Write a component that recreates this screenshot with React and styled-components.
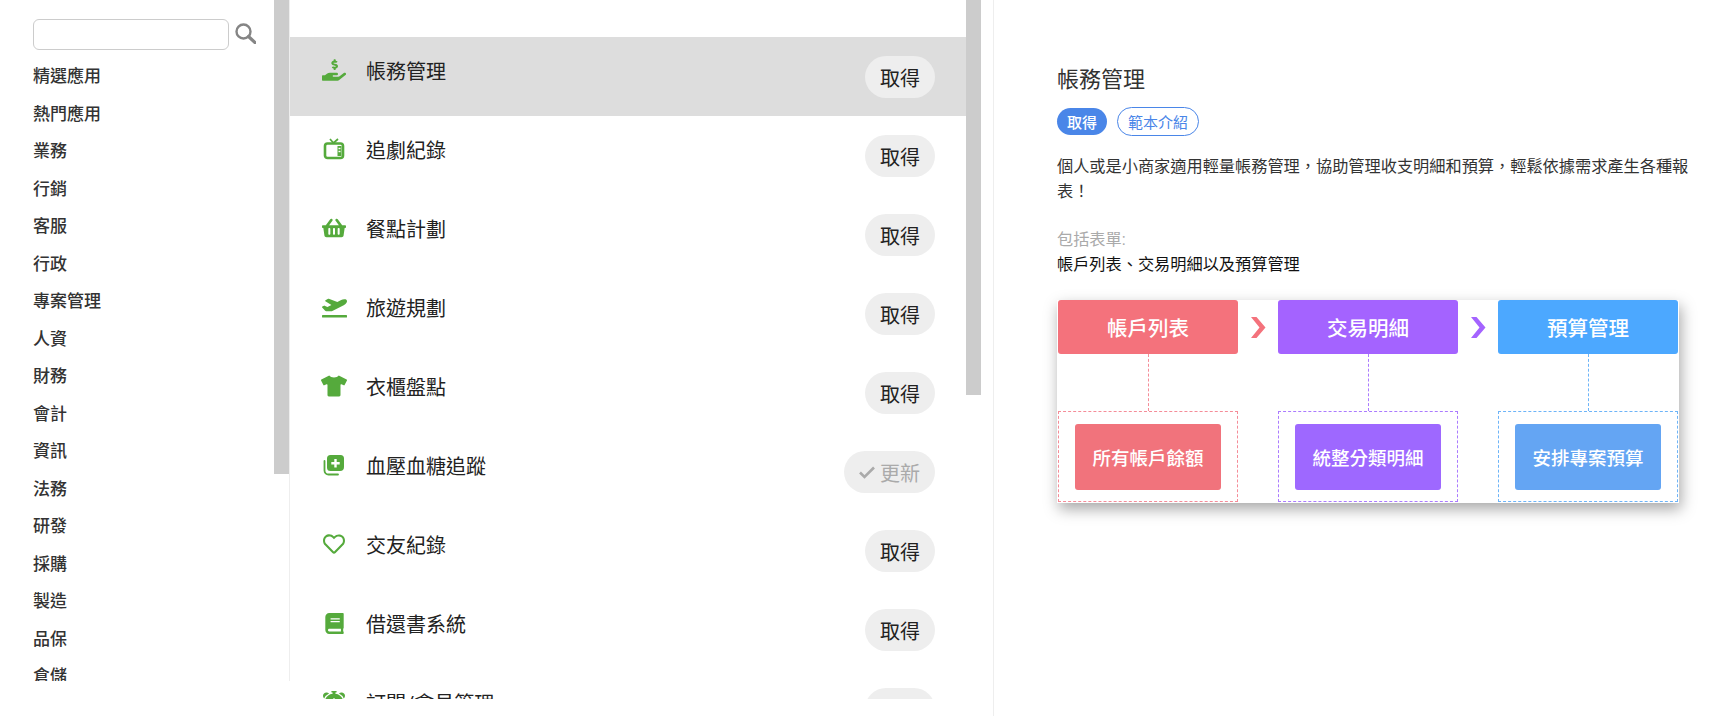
import React from "react";
import styled, { createGlobalStyle } from "styled-components";
import { FaHandHoldingUsd, FaShoppingBasket, FaTshirt, FaBook, FaPlaneDeparture, FaRegHeart } from "react-icons/fa";
import { BsAlarmFill } from "react-icons/bs";

const GlobalStyle = createGlobalStyle`
  html, body { margin: 0; height: 100%; background: #fff; overflow: hidden; }
  * { box-sizing: border-box; }
  body { font-family: Roboto, "Noto Sans CJK TC", sans-serif; color: #333; }
`;

const Page = styled.div`
  display: flex;
  height: 716px;
  overflow: hidden;
`;

const ScrollThumb = styled.div`
  position: absolute;
  top: 0;
  right: ${(p) => p.$right}px;
  width: 15px;
  height: ${(p) => p.$height}px;
  background: #ccc;
`;

const Sidebar = styled.aside`
  position: relative;
  width: 290px;
  height: 681px;
  flex-shrink: 0;
  border-right: 1px solid #eee;
  padding: 19px 0 0 33px;
  overflow: hidden;
`;

const SearchRow = styled.div`
  display: flex;
  align-items: flex-start;
  gap: 6px;
  margin-bottom: 8px;
`;

const SearchInput = styled.input`
  width: 196px;
  height: 31px;
  border: 1px solid #ccc;
  border-radius: 6px;
  background: #fff;
  outline: none;
`;

const SearchIcon = styled.svg`
  width: 21px;
  height: 21px;
  margin-top: 4px;
  color: #858585;
`;

const NavList = styled.ul`
  list-style: none;
  margin: 0;
  padding: 0;
`;

const NavItem = styled.li`
  font-size: 17px;
  font-weight: 500;
  line-height: 37.5px;
  color: #333;
`;

const Column = styled.div`
  position: relative;
  width: 704px;
  flex-shrink: 0;
  height: 716px;
  border-right: 1px solid #eee;
`;

const ListPanel = styled.section`
  width: 677px;
  height: 699px;
  padding-top: 37px;
  overflow: hidden;
`;

const Row = styled.div`
  display: flex;
  align-items: flex-start;
  height: 79px;
  padding: 0 32px;
  background: ${(p) => (p.$active ? "#ddd" : "transparent")};
`;

const IconSlot = styled.span`
  display: flex;
  justify-content: center;
  align-items: center;
  width: 26px;
  height: 26px;
  margin: 20px 19px 0 -1px;
  color: #55aa3c;
  font-size: 24px;
`;

const AppName = styled.span`
  font-size: 20px;
  line-height: 30px;
  margin-top: 20px;
  color: #222;
`;

const GetButton = styled.button`
  display: flex;
  align-items: center;
  gap: 5px;
  margin: 19px 0 0 auto;
  height: 42px;
  padding: 0 15px;
  border: none;
  border-radius: 21px;
  background: #eee;
  color: ${(p) => (p.$muted ? "#aaa" : "#222")};
  font: inherit;
  font-size: 20px;
`;

const Detail = styled.main`
  flex: 1;
  padding: 65px 25px 0 63px;
`;

const Title = styled.h1`
  margin: 0 0 12px;
  font-size: 22px;
  font-weight: 400;
  line-height: 30px;
  color: #333;
`;

const Actions = styled.div`
  display: flex;
  align-items: center;
  gap: 10px;
  margin-bottom: 19px;
`;

const Pill = styled.span`
  display: flex;
  align-items: center;
  height: ${(p) => (p.$outline ? "29px" : "27px")};
  padding: 0 10px;
  border-radius: 15px;
  border: ${(p) => (p.$outline ? "1px solid #4a86e8" : "none")};
  background: ${(p) => (p.$outline ? "#fff" : "#4a86e8")};
  color: ${(p) => (p.$outline ? "#4a86e8" : "#fff")};
  font-size: 15px;
  font-weight: ${(p) => (p.$outline ? 400 : 500)};
`;

const Description = styled.p`
  margin: 0 0 24px;
  font-size: 16.2px;
  line-height: 24.5px;
  color: #333;
`;

const Label = styled.div`
  font-size: 16.2px;
  line-height: 24px;
  color: #aaa;
`;

const Forms = styled.div`
  margin-top: 1px;
  font-size: 16.2px;
  line-height: 24px;
  color: #111;
`;

const Flow = styled.div`
  display: flex;
  justify-content: space-between;
  width: 622px;
  height: 203px;
  margin-top: 23px;
  padding: 0 1px;
  background: #fff;
  box-shadow: 2px 6px 14px rgba(0, 0, 0, 0.35);
`;

const Stage = styled.div`
  display: flex;
  flex-direction: column;
  align-items: center;
  width: 180px;
`;

const Head = styled.div`
  display: flex;
  align-items: center;
  justify-content: center;
  width: 100%;
  height: 54px;
  border-radius: 3px;
  background: ${(p) => p.$color};
  color: #fff;
  font-size: 20.5px;
  font-weight: 500;
`;

const Connector = styled.div`
  flex: 1;
  border-left: 1px dashed ${(p) => p.$color};
`;

const Group = styled.div`
  display: flex;
  align-items: center;
  justify-content: center;
  width: 100%;
  height: 91px;
  margin-bottom: 1px;
  border: 1px dashed ${(p) => p.$color};
`;

const Tile = styled.div`
  display: flex;
  align-items: center;
  justify-content: center;
  width: 146px;
  height: 66px;
  border-radius: 3px;
  background: ${(p) => p.$color};
  color: #fff;
  font-size: 18.5px;
  font-weight: 500;
`;

const Arrow = styled.svg`
  flex-shrink: 0;
  width: 16px;
  height: 21px;
  margin: 17px 0 0;
`;

const categories = ["精選應用", "熱門應用", "業務", "行銷", "客服", "行政", "專案管理", "人資", "財務", "會計", "資訊", "法務", "研發", "採購", "製造", "品保", "倉儲"];

const TvIcon = () => (
  <svg width="22" height="22" viewBox="0 0 22 22">
    <path d="M7 1l3.500 4L15 1" fill="none" stroke="currentColor" strokeWidth="1.700" />
    <rect x="2" y="5.500" width="18" height="14.500" rx="2.500" fill="none" stroke="currentColor" strokeWidth="2.600" />
    <rect x="14.500" y="8" width="4" height="10" fill="currentColor" />
    <rect x="15.500" y="9.800" width="2" height="1.400" fill="#fff" />
    <rect x="15.500" y="12.800" width="2" height="1.400" fill="#fff" />
  </svg>
);

const StackPlus = () => (
  <svg width="22" height="22" viewBox="0 0 22 22">
    <path d="M1.500 7v9.500a4 4 0 0 0 4 4H15" fill="none" stroke="currentColor" strokeWidth="1.800" strokeLinecap="round" />
    <path fill="currentColor" fillRule="evenodd" d="M7.500 1h10A3.500 3.500 0 0 1 21 4.500v8.500a4 4 0 0 1-4 4H7.500A3.500 3.500 0 0 1 4 13.500V4.500A3.500 3.500 0 0 1 7.500 1zM11.300 5v3H8.300v2.400h3v3h2.400v-3h3V8h-3V5z" />
  </svg>
);

const CheckIcon = () => (
  <svg width="16" height="13" viewBox="0 0 16 13">
    <path d="M1 6.500l4.500 4.500L15 1.500" fill="none" stroke="currentColor" strokeWidth="2.600" />
  </svg>
);

const apps = [
  { name: "帳務管理", icon: <FaHandHoldingUsd />, active: true },
  { name: "追劇紀錄", icon: <TvIcon /> },
  { name: "餐點計劃", icon: <FaShoppingBasket size={24} /> },
  { name: "旅遊規劃", icon: <FaPlaneDeparture size={25} /> },
  { name: "衣櫃盤點", icon: <FaTshirt size={26} /> },
  { name: "血壓血糖追蹤", icon: <StackPlus />, update: true },
  { name: "交友紀錄", icon: <FaRegHeart size={22} /> },
  { name: "借還書系統", icon: <FaBook size={21} /> },
  { name: "訂閱/會員管理", icon: <BsAlarmFill size={22} /> },
];

const stages = [
  { head: "帳戶列表", tile: "所有帳戶餘額", headColor: "#f4727c", tileColor: "#f1737c", line: "#f58c98", arrow: "#f4727c" },
  { head: "交易明細", tile: "統整分類明細", headColor: "#a463ff", tileColor: "#9e68ff", line: "#ab7bff", arrow: "#a463ff" },
  { head: "預算管理", tile: "安排專案預算", headColor: "#4ca8ff", tileColor: "#64a5f3", line: "#6db4f8" },
];

const App = () => {
  return (
    <Page>
      <GlobalStyle />
      <Sidebar>
        <SearchRow>
          <SearchInput />
          <SearchIcon viewBox="0 0 21 21">
            <circle cx="8.500" cy="8.500" r="7" fill="none" stroke="currentColor" strokeWidth="2.400" />
            <path d="M13.500 13.500L20 19.500" stroke="currentColor" strokeWidth="3.200" strokeLinecap="round" />
          </SearchIcon>
        </SearchRow>
        <NavList>
          {categories.map((c) => (
            <NavItem key={c}>{c}</NavItem>
          ))}
        </NavList>
        <ScrollThumb $right={0} $height={474} />
      </Sidebar>
      <Column>
        <ListPanel>
          {apps.map((a) => (
            <Row key={a.name} $active={a.active}>
              <IconSlot>{a.icon}</IconSlot>
              <AppName>{a.name}</AppName>
              <GetButton $muted={a.update}>
                {a.update && <CheckIcon />}
                {a.update ? "更新" : "取得"}
              </GetButton>
            </Row>
          ))}
        </ListPanel>
        <ScrollThumb $right={12} $height={395} />
      </Column>
      <Detail>
        <Title>帳務管理</Title>
        <Actions>
          <Pill>取得</Pill>
          <Pill $outline>範本介紹</Pill>
        </Actions>
        <Description>個人或是小商家適用輕量帳務管理，協助管理收支明細和預算，輕鬆依據需求產生各種報表！</Description>
        <Label>包括表單:</Label>
        <Forms>帳戶列表、交易明細以及預算管理</Forms>
        <Flow>
          {stages.map((s) => (
            <React.Fragment key={s.head}>
              <Stage>
                <Head $color={s.headColor}>{s.head}</Head>
                <Connector $color={s.line} />
                <Group $color={s.line}>
                  <Tile $color={s.tileColor}>{s.tile}</Tile>
                </Group>
              </Stage>
              {s.arrow && (
                <Arrow viewBox="0 0 16 21">
                  <path d="M1 0h5.500L15.500 10.500 6.500 21H1l8.500-10.500z" fill={s.arrow} />
                </Arrow>
              )}
            </React.Fragment>
          ))}
        </Flow>
      </Detail>
    </Page>
  );
};

export default App;
